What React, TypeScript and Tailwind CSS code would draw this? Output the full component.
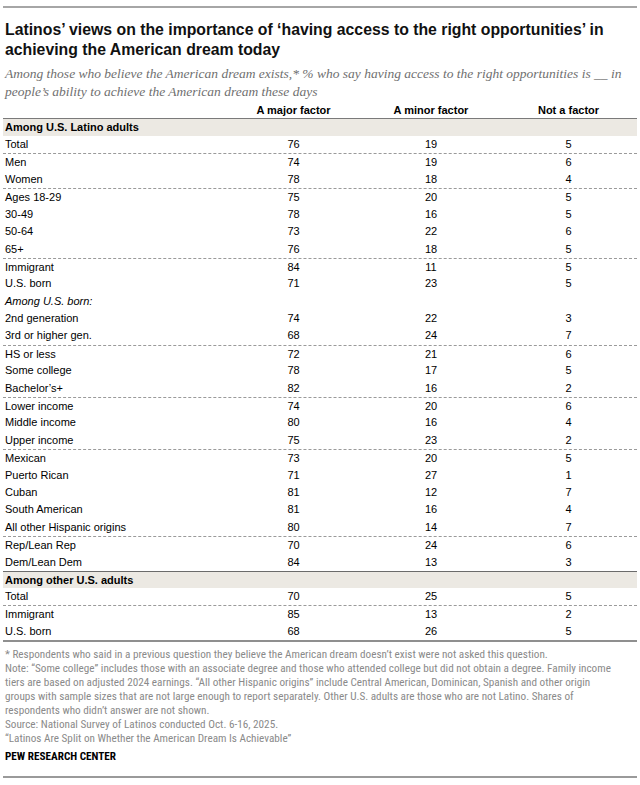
import React from "react";

type Row = { label: string; v?: [number, number, number]; sep?: boolean; italic?: boolean };

const latino: Row[] = [
  { label: "Total", v: [76, 19, 5] },
  { label: "Men", v: [74, 19, 6], sep: true },
  { label: "Women", v: [78, 18, 4] },
  { label: "Ages 18-29", v: [75, 20, 5], sep: true },
  { label: "30-49", v: [78, 16, 5] },
  { label: "50-64", v: [73, 22, 6] },
  { label: "65+", v: [76, 18, 5] },
  { label: "Immigrant", v: [84, 11, 5], sep: true },
  { label: "U.S. born", v: [71, 23, 5] },
  { label: "Among U.S. born:", italic: true },
  { label: "2nd generation", v: [74, 22, 3] },
  { label: "3rd or higher gen.", v: [68, 24, 7] },
  { label: "HS or less", v: [72, 21, 6], sep: true },
  { label: "Some college", v: [78, 17, 5] },
  { label: "Bachelor’s+", v: [82, 16, 2] },
  { label: "Lower income", v: [74, 20, 6], sep: true },
  { label: "Middle income", v: [80, 16, 4] },
  { label: "Upper income", v: [75, 23, 2] },
  { label: "Mexican", v: [73, 20, 5], sep: true },
  { label: "Puerto Rican", v: [71, 27, 1] },
  { label: "Cuban", v: [81, 12, 7] },
  { label: "South American", v: [81, 16, 4] },
  { label: "All other Hispanic origins", v: [80, 14, 7] },
  { label: "Rep/Lean Rep", v: [70, 24, 6], sep: true },
  { label: "Dem/Lean Dem", v: [84, 13, 3] },
];

const others: Row[] = [
  { label: "Total", v: [70, 25, 5] },
  { label: "Immigrant", v: [85, 13, 2], sep: true },
  { label: "U.S. born", v: [68, 26, 5] },
];

const cols = "grid grid-cols-[222px_137px_138px_1fr]";

function DataRow({ row }: { row: Row }) {
  return (
    <div
      className={`${cols} h-[17.4px] items-center leading-[17px] ${
        row.sep ? "border-t border-dashed border-[#9a9a9a]" : ""
      }`}
    >
      <div className={`pl-[2px] ${row.italic ? "italic" : ""}`}>{row.label}</div>
      {row.v?.map((n, i) => (
        <div key={i} className="text-center">
          {n}
        </div>
      ))}
    </div>
  );
}

function Band({ title, top }: { title: string; top?: boolean }) {
  return (
    <div
      className={`h-[17px] bg-[#ece9e3] pl-[2px] font-bold leading-[17px] ${
        top ? "border-t border-[#6b6b6b]" : ""
      }`}
    >
      {title}
    </div>
  );
}

export default function App() {
  return (
    <div className="w-[640px] h-[785px] bg-white px-[3px] pt-[6px] text-black font-['Liberation_Sans',Arial,sans-serif]">
      <div className="border-t-2 border-[#a6a6a6]" />

      {/* Title */}
      <h1 className="mt-[12px] pl-[2px] text-[15.8px] font-bold leading-[20px] text-[#111]">
        Latinos’ views on the importance of ‘having access to the right opportunities’ in
        <br />
        achieving the American dream today
      </h1>

      {/* Subtitle */}
      <p className="mt-[5px] pl-[2px] font-['Liberation_Serif',serif] text-[13.5px] italic leading-[18px] text-[#6f6f6f]">
        Among those who believe the American dream exists,* % who say having access to the right opportunities is __ in
        <br />
        people’s ability to achieve the American dream these days
      </p>

      {/* Table */}
      <div className="mt-[2px] text-[11px]">
        <div className={`${cols} h-[16px] items-end border-b border-[#7a7a7a] font-bold leading-[15px]`}>
          <div />
          <div className="text-center">A major factor</div>
          <div className="text-center">A minor factor</div>
          <div className="text-center">Not a factor</div>
        </div>
        <Band title="Among U.S. Latino adults" />
        {latino.map((r, i) => (
          <DataRow key={i} row={r} />
        ))}
        <Band title="Among other U.S. adults" top />
        {others.map((r, i) => (
          <DataRow key={i} row={r} />
        ))}
        <div className="border-b-2 border-[#8f8f8f]" />
      </div>

      {/* Notes */}
      <div className="mt-[6px] pl-[2px] font-['Liberation_Sans_Narrow','Roboto_Condensed',sans-serif] text-[11.2px] leading-[14px] text-[#8a8a8a]">
        <p>* Respondents who said in a previous question they believe the American dream doesn’t exist were not asked this question.</p>
        <p>
          Note: “Some college” includes those with an associate degree and those who attended college but did not obtain a degree. Family income
          <br />
          tiers are based on adjusted 2024 earnings. “All other Hispanic origins” include Central American, Dominican, Spanish and other origin
          <br />
          groups with sample sizes that are not large enough to report separately. Other U.S. adults are those who are not Latino. Shares of
          <br />
          respondents who didn’t answer are not shown.
        </p>
        <p>Source: National Survey of Latinos conducted Oct. 6-16, 2025.</p>
        <p>“Latinos Are Split on Whether the American Dream Is Achievable”</p>
        <p className="mt-[4px] font-bold text-black">PEW RESEARCH CENTER</p>
      </div>
      <div className="mt-[12px] border-t-2 border-[#9a9a9a]" />
    </div>
  );
}
